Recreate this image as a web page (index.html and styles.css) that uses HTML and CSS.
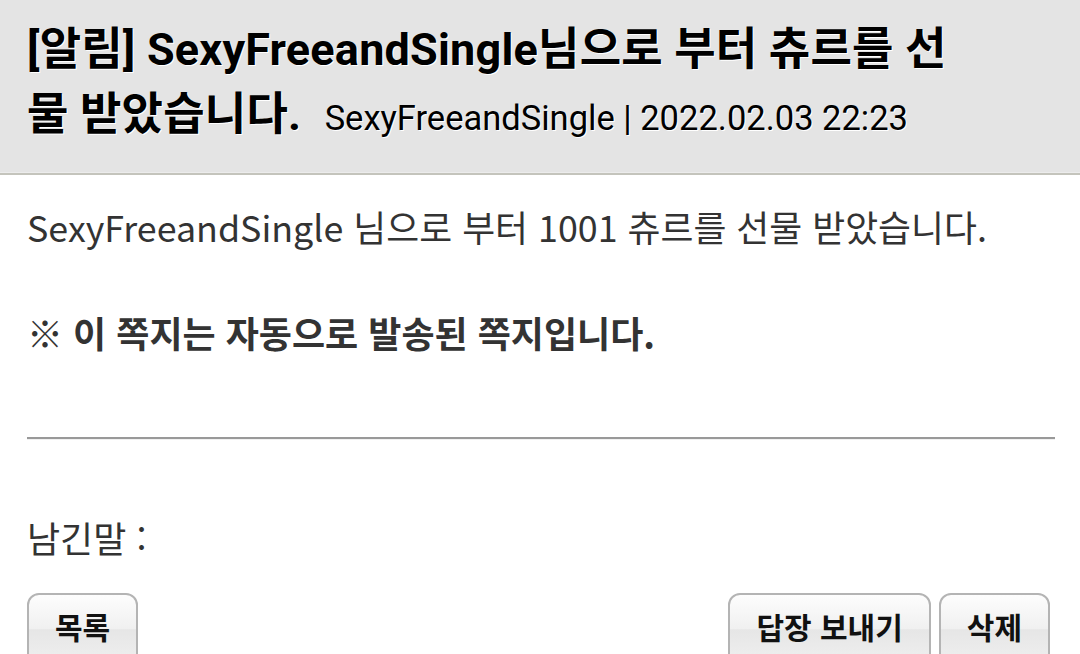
FILE: index.html
```html
<!DOCTYPE html>
<html lang="ko">
<head>
<meta charset="utf-8">
<link rel="stylesheet" href="styles.css">
</head>
<body>
<div class="header">
  <h1 class="title">[알림] SexyFreeandSingle님으로 부터 츄르를 선물 받았습니다. <span class="meta">SexyFreeandSingle | 2022.02.03 22:23</span></h1>
</div>
<div class="content">
  <p class="msg">SexyFreeandSingle 님으로 부터 1001 츄르를 선물 받았습니다.</p>
  <p class="note">※ 이 쪽지는 자동으로 발송된 쪽지입니다.</p>
  <hr class="divider">
  <p class="memo">남긴말 :</p>
  <div class="actions">
    <button class="btn">목록</button>
    <div class="right">
      <button class="btn">답장 보내기</button>
      <button class="btn">삭제</button>
    </div>
  </div>
</div>
</body>
</html>
```

FILE: styles.css
```css
html, body {
  margin: 0;
  padding: 0;
  background: #fff;
}
body {
  width: 1080px;
  height: 654px;
  overflow: hidden;
  font-family: "Noto Sans CJK KR", sans-serif;
}
.header {
  background: #e4e4e4;
  border-bottom: 2px solid #c4c4bc;
  box-shadow: inset 0 -1px 0 #ececec;
  padding: 17px 100px 26px 27px;
  height: 130px;
}
.title {
  margin: 0;
  font-family: Roboto, "Noto Sans CJK KR", sans-serif;
  font-weight: 700;
  font-size: 45px;
  letter-spacing: 0.2px;
  line-height: 65px;
  color: #000;
  text-shadow: 1px 1px 0 #fff;
}
.meta {
  font-weight: 400;
  font-size: 34.5px;
  letter-spacing: 0;
  margin-left: 12px;
}
.content {
  padding: 0 25px 0 27px;
}
.msg {
  margin: 24px 0 0;
  font-size: 35.8px;
  line-height: 54px;
  color: #333;
}
.note {
  margin: 52px 0 0;
  font-size: 36px;
  line-height: 54px;
  font-weight: 700;
  color: #333;
}
.divider {
  margin: 78px 0 0;
  border: 0;
  height: 0;
  border-top: 2px solid #999;
  border-bottom: 1px solid #f0f0f0;
}
.memo {
  margin: 70px 0 0;
  font-size: 36px;
  line-height: 54px;
  color: #333;
}
.actions {
  margin-top: 29px;
  display: flex;
  justify-content: space-between;
  padding-right: 5px;
}
.right {
  display: flex;
  gap: 8px;
}
.btn {
  font-family: "Noto Sans CJK KR", sans-serif;
  font-weight: 700;
  font-size: 30px;
  color: #111;
  height: 72px;
  padding: 0 26px 6px;
  border: 2px solid #b4b4b4;
  border-radius: 12px;
  background: linear-gradient(#fdfdfd, #f0f0f0 50%, #e6e6e6 51%, #efefef);
  line-height: 1;
}
```
